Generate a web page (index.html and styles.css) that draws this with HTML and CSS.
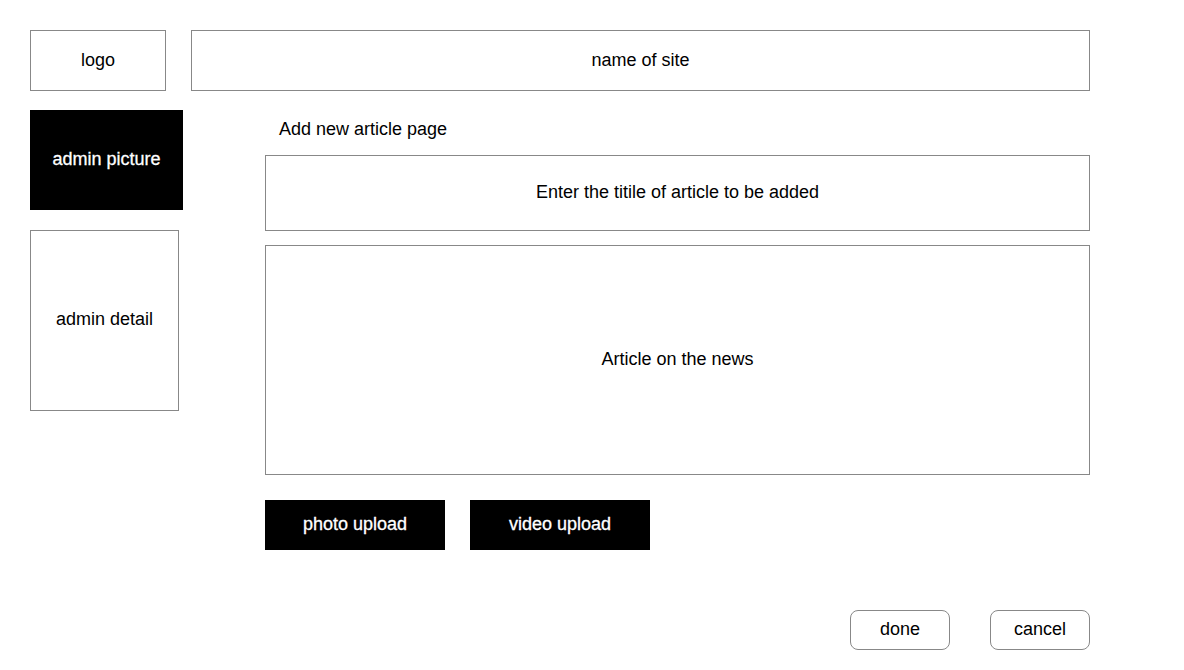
FILE: index.html
```html
<!DOCTYPE html>
<html>
<head>
<meta charset="utf-8">
<link rel="stylesheet" href="styles.css">
</head>
<body>
<div class="page">
  <div class="header">
    <div class="box logo">logo</div>
    <div class="box site-name">name of site</div>
  </div>
  <div class="body">
    <div class="sidebar">
      <div class="dark admin-pic">admin picture</div>
      <div class="box admin-detail">admin detail</div>
    </div>
    <div class="main">
      <div class="page-label">Add new article page</div>
      <div class="box title-input">Enter the titile of article to be added</div>
      <div class="box article-input">Article on the news</div>
      <div class="uploads">
        <div class="dark upload">photo upload</div>
        <div class="dark upload">video upload</div>
      </div>
      <div class="actions">
        <div class="box action">done</div>
        <div class="box action">cancel</div>
      </div>
    </div>
  </div>
</div>
</body>
</html>
```
FILE: styles.css
```css
html, body {
  margin: 0;
  padding: 0;
  background: #fff;
}
body {
  font-family: "Liberation Sans", Arial, sans-serif;
  font-size: 18px;
  color: #000;
}
.page {
  padding: 30px 0 0 30px;
  width: 1060px;
}
.box {
  box-sizing: border-box;
  border: 1px solid #888;
  display: flex;
  align-items: center;
  justify-content: center;
  background: #fff;
}
.dark {
  box-sizing: border-box;
  background: #000;
  color: #fff;
  display: flex;
  align-items: center;
  justify-content: center;
  -webkit-text-stroke: 0.3px #fff;
}
.header {
  display: flex;
  gap: 25px;
  height: 61px;
}
.logo {
  width: 136px;
  height: 61px;
}
.site-name {
  width: 900px;
  height: 61px;
}
.body {
  display: flex;
}
.sidebar {
  width: 153px;
  display: flex;
  flex-direction: column;
  padding-top: 19px;
  gap: 20px;
}
.admin-pic {
  width: 153px;
  height: 100px;
  padding-bottom: 2px;
}
.admin-detail {
  width: 149px;
  height: 181px;
  padding-bottom: 2px;
}
.main {
  margin-left: 82px;
  width: 825px;
  display: flex;
  flex-direction: column;
}
.page-label {
  padding-left: 14px;
  height: 64px;
  line-height: 76px;
  box-sizing: border-box;
}
.title-input {
  height: 76px;
  padding-bottom: 2px;
}
.article-input {
  height: 230px;
  margin-top: 14px;
  padding-bottom: 2px;
}
.uploads {
  display: flex;
  gap: 25px;
  margin-top: 25px;
}
.upload {
  width: 180px;
  height: 50px;
  padding-bottom: 2px;
}
.actions {
  display: flex;
  justify-content: flex-end;
  gap: 40px;
  margin-top: 60px;
}
.action {
  width: 100px;
  height: 40px;
  border-radius: 8px;
  padding-bottom: 2px;
}
```
